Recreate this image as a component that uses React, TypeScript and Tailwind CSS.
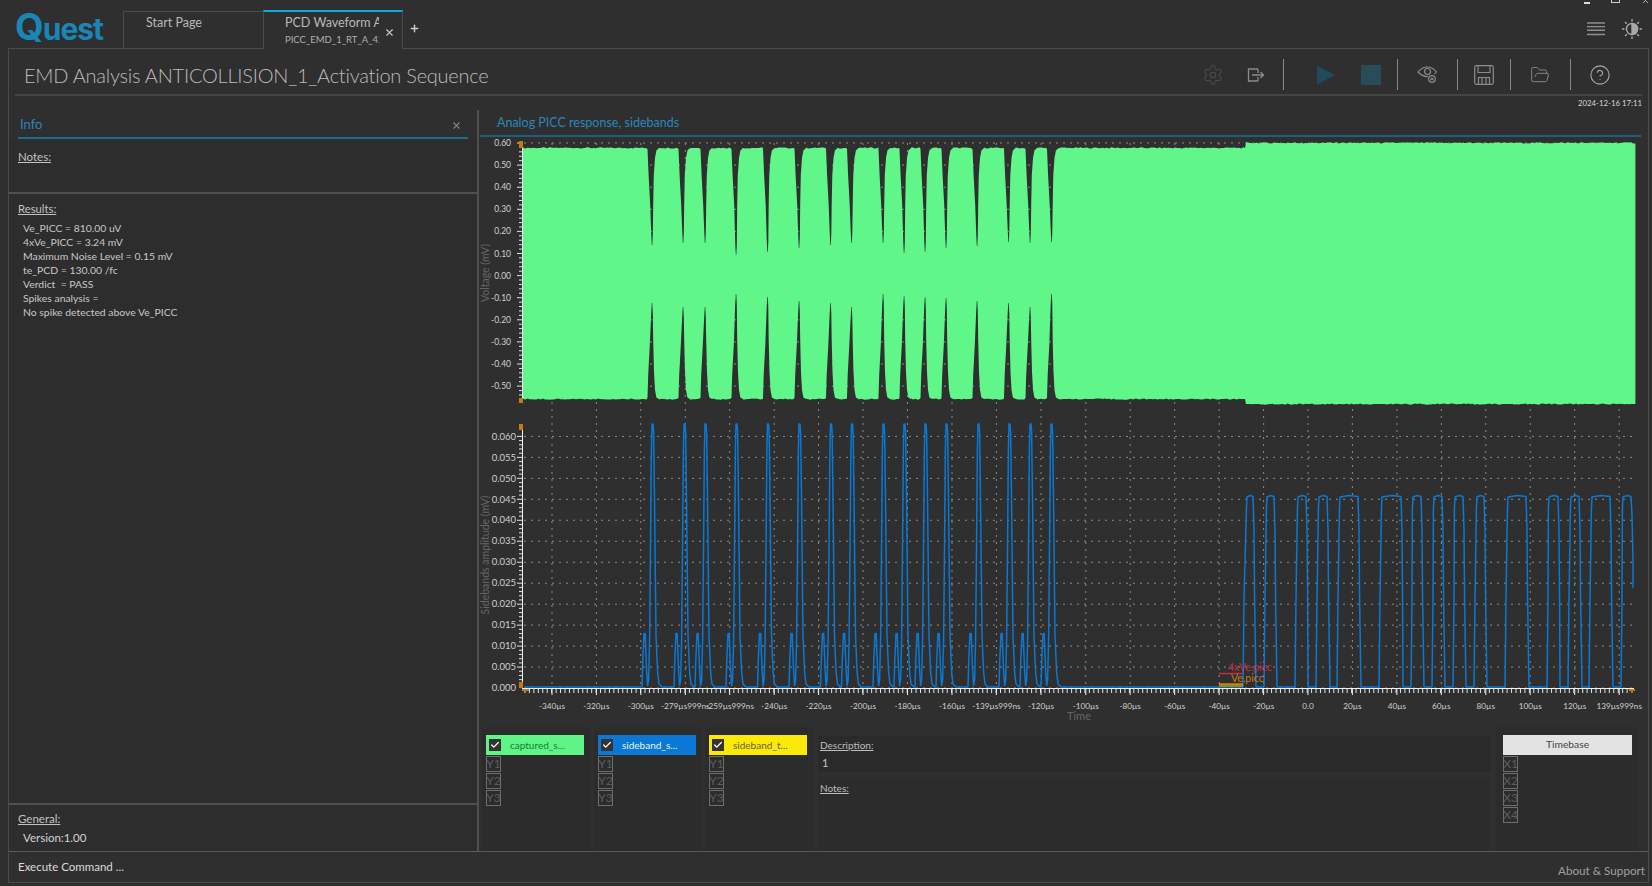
import React from 'react';
import { X, Plus, Check, Settings, FolderOpen, CircleHelp } from 'lucide-react';

const GREEN = '#61f689';
const BLUE = '#0a78d4';

// notch centre, upper tip y, lower tip y
const notches: [number, number, number][] = [
  [652, 245, 303], [683, 243, 307], [705, 243, 307], [736, 255, 294],
  [767.5, 252, 297], [799, 248, 301], [830.5, 245, 303], [851.5, 243, 307],
  [883, 243, 294], [904, 253, 296], [925, 252, 297], [946, 248, 298],
  [977, 246, 301], [1008.5, 242, 303], [1030, 243, 307], [1051.5, 242, 294],
];

// simple repeatable noise so the trace edge is not a ruler line
const noise = (i: number) => {
  const s = Math.sin(i * 12.9898) * 43758.5453;
  return s - Math.floor(s);
};

const buildGreen = () => {
  const top: string[] = [];
  const bottom: string[] = [];
  let n = 0;
  const walk = (from: number, to: number, y: number, dir: number, out: string[]) => {
    const step = 2.2;
    for (let x = from; x < to; x += step) {
      n += 1;
      out.push(`${x.toFixed(1)},${(y + dir * (noise(n) * 1.2 - 0.5)).toFixed(1)}`);
    }
  };
  let cursor = 523;
  notches.forEach(([c, tipT]) => {
    walk(cursor, c - 4.5, 148, -1, top);
    top.push(
      `${c - 4.5},149`, `${c - 3.4},175`, `${c - 1.8},205`, `${c - 0.7},${tipT - 10}`, `${c - 0.2},${tipT}`,
      `${c + 0.3},${tipT}`, `${c + 0.8},${tipT - 10}`, `${c + 1.2},205`, `${c + 1.8},175`, `${c + 3},158`, `${c + 4.4},150.5`, `${c + 7},148`
    );
    cursor = c + 7;
  });
  walk(cursor, 1245, 148, -1, top);
  top.push('1245,148', '1246,143');
  walk(1246, 1636, 143, -1, top);
  cursor = 523;
  notches.forEach(([c, , tipB]) => {
    walk(cursor, c - 4.5, 399, 1, bottom);
    bottom.push(
      `${c - 4.5},398`, `${c - 3.8},375`, `${c - 2.2},345`, `${c - 0.8},${tipB + 10}`, `${c - 0.2},${tipB}`,
      `${c + 0.3},${tipB}`, `${c + 0.8},${tipB + 10}`, `${c + 1.2},340`, `${c + 2},372`, `${c + 3},390`, `${c + 4.4},397.5`, `${c + 7},399`
    );
    cursor = c + 7;
  });
  walk(cursor, 1245, 399, 1, bottom);
  bottom.push('1245,399', '1246,404');
  walk(1246, 1636, 404, 1, bottom);
  return `M${top.join(' L')} L${bottom.reverse().join(' L')} Z`;
};

const peakX = [653, 685, 706, 737, 768.5, 800, 831.5, 852.5, 884, 905, 926, 947, 979, 1010, 1031, 1052];

// rise start, top start, top end, fall end
const pulses: [number, number, number, number][] = [
  [1243, 1247, 1253, 1256], [1264, 1267, 1274, 1277], [1295, 1298, 1306, 1308], [1316, 1319, 1327, 1330],
  [1337, 1340, 1358, 1361], [1379, 1382, 1401, 1403], [1411, 1413, 1421, 1424], [1432, 1434, 1442, 1445],
  [1453, 1455, 1463, 1466], [1474, 1477, 1484, 1487], [1505, 1508, 1526, 1529], [1547, 1549, 1558, 1560],
  [1568, 1571, 1579, 1582], [1589, 1592, 1610, 1613], [1621, 1623, 1631, 1631],
];

const buildBlue = () => {
  const pts: string[] = ['524,687'];
  peakX.forEach((c) => {
    const s: [number, number][] = [
      [c - 11, 687], [c - 10.2, 660], [c - 9, 633.5], [c - 7.8, 633.5], [c - 6.5, 668], [c - 5.4, 685.5],
      [c - 4.4, 680], [c - 3.4, 640], [c - 2.4, 540], [c - 1.6, 450], [c - 1, 424], [c, 424], [c + 0.6, 432],
      [c + 1.6, 505], [c + 3, 635], [c + 4.6, 672], [c + 6, 684], [c + 9, 687],
    ];
    s.forEach(([x, y]) => pts.push(`${x},${y}`));
  });
  pulses.forEach(([a, b, c, d], i) => {
    pts.push(`${a},687`, `${a + 1},600`, `${b - 0.6},510`, `${b},497`, `${(b + c) / 2},495.5`, `${c},496.5`);
    if (i === pulses.length - 1) {
      pts.push('1632,515', '1633,560', '1633,588');
    } else {
      pts.push(`${c + 1},530`, `${c + 1.6},600`, `${d},687`);
    }
  });
  return `M${pts.join(' L')}`;
};

const xTicks = [
  [552, '-340µs'], [596.4, '-320µs'], [640.8, '-300µs'], [685.3, '-279µs999ns'], [729.7, '-259µs999ns'],
  [774.2, '-240µs'], [818.6, '-220µs'], [863, '-200µs'], [907.5, '-180µs'], [952, '-160µs'],
  [996.4, '-139µs999ns'], [1041, '-120µs'], [1085.8, '-100µs'], [1130.2, '-80µs'], [1174.7, '-60µs'],
  [1219.2, '-40µs'], [1263.6, '-20µs'], [1308, '0.0'], [1352.4, '20µs'], [1396.9, '40µs'],
  [1441.3, '60µs'], [1485.8, '80µs'], [1530.2, '100µs'], [1574.7, '120µs'], [1619.2, '139µs999ns'],
] as [number, string][];

const voltLabels = ['0.60', '0.50', '0.40', '0.30', '0.20', '0.10', '0.00', '-0.10', '-0.20', '-0.30', '-0.40', '-0.50'];
const sideLabels = ['0.060', '0.055', '0.050', '0.045', '0.040', '0.035', '0.030', '0.025', '0.020', '0.015', '0.010', '0.005', '0.000'];

const range = (from: number, to: number, step: number) => {
  const out: number[] = [];
  for (let v = from; v <= to + 0.01; v += step) out.push(v);
  return out;
};

const Charts = () => (
  <svg viewBox="479 137 1170 590" className="block w-[1170px] h-[590px]">
    {/* grid */}
    {voltLabels.map((_, i) => (
      <line key={i} x1="524" x2="1634" y1={143 + i * 22.1} y2={143 + i * 22.1} stroke="#8c8c8c" strokeDasharray="2 5" />
    ))}
    {sideLabels.map((_, i) => (
      <line key={i} x1="524" x2="1634" y1={436.4 + i * 20.97} y2={436.4 + i * 20.97} stroke="#8c8c8c" strokeDasharray="2 5" />
    ))}
    {xTicks.map(([x], i) => (
      <line key={i} x1={x} x2={x} y1="143" y2="688" stroke="#8c8c8c" strokeDasharray="2 5" />
    ))}

    <path d={buildGreen()} fill={GREEN} />
    <path d={buildBlue()} fill="none" stroke={BLUE} strokeWidth="1.5" strokeLinejoin="round" />

    {/* y axes */}
    <line x1="522.5" x2="522.5" y1="143" y2="400" stroke="#f0f0f0" />
    <line x1="522.5" x2="522.5" y1="424" y2="688" stroke="#f0f0f0" />
    {range(143, 400, 4.42).map((y, i) => (
      <line key={i} x1={i % 5 === 0 ? 517 : 519} x2="522" y1={y} y2={y} stroke="#e4e4e4" />
    ))}
    {range(436.4, 688, 4.194).map((y, i) => (
      <line key={i} x1={i % 5 === 0 ? 517 : 519} x2="522" y1={y} y2={y} stroke="#e4e4e4" />
    ))}
    {voltLabels.map((t, i) => (
      <text key={t} x="511" y={146 + i * 22.1} textAnchor="end" fontSize="8.5" fill="#d0d0d0">{t}</text>
    ))}
    {sideLabels.map((t, i) => (
      <text key={t} x="516" y={439.6 + i * 20.97} textAnchor="end" fontSize="9.5" fill="#d0d0d0">{t}</text>
    ))}
    <text x="486" y="273" fontSize="10.5" fill="#666" textAnchor="middle" transform="rotate(-90 486 273)" dominantBaseline="middle">Voltage (mV)</text>
    <text x="486" y="555" fontSize="10.5" fill="#666" textAnchor="middle" transform="rotate(-90 486 555)" dominantBaseline="middle">Sidebands amplitude (mV)</text>

    {/* x axis */}
    <line x1="522" x2="1634" y1="688.5" y2="688.5" stroke="#f0f0f0" />
    {range(525, 1632, 4.444).map((x, i) => (
      <line key={i} x1={x} x2={x} y1="689" y2="693" stroke="#e4e4e4" />
    ))}
    {xTicks.map(([x, t]) => (
      <g key={t}>
        <line x1={x} x2={x} y1="689" y2="695" stroke="#f0f0f0" />
        <text x={x} y="709" textAnchor="middle" fontSize="8.2" fill="#d0d0d0">{t}</text>
      </g>
    ))}
    <text x="1079" y="720" textAnchor="middle" fontSize="11" fill="#666">Time</text>

    {/* range handles */}
    <path d="M519 141h4v7h-4z" fill="#c47a17" />
    <path d="M519 398h4v5h-4z" fill="#c47a17" />
    <path d="M519 424h4v6h-4z" fill="#c47a17" />
    <path d="M519 682h4v6h-4zM522 689h7v2h-7z" fill="#c47a17" />
    <path d="M1629 689h6v2h-2v2h-2v-2h-2z" fill="#c47a17" />

    {/* limit markers */}
    <line x1="1219" x2="1243" y1="673.5" y2="673.5" stroke="#b8323f" strokeWidth="1.5" />
    <text x="1228" y="671" fontSize="10.5" fill="#c23545">4xVe.picc</text>
    <rect x="1219" y="684" width="24" height="3" fill="#8f8a1f" />
    <line x1="1219" x2="1243" y1="684" y2="684" stroke="#e07f10" strokeWidth="1.5" />
    <text x="1231" y="682" fontSize="10.5" fill="#c87a10">Ve.picc</text>
  </svg>
);

const AxisBox = ({ label }: { label: string }) => (
  <div className="w-[15px] h-[16px] border border-[#6e6e6e] flex items-center justify-center text-[12px] leading-none text-[#5c5c5c]">
    {label}
  </div>
);

const SeriesColumn = ({ name, bg, text, width }: { name: string; bg: string; text: string; width: string }) => (
  <div className={`${width} shrink-0 bg-[#2c2c2c] flex flex-col`}>
    <div className={`${bg} ${text} mt-[8px] ml-[4px] w-[98px] h-[20px] flex items-center text-[10px]`}>
      <span className="ml-[3px] w-[12px] h-[12px] bg-[#333] flex items-center justify-center">
        <Check size={10} strokeWidth={3} className="text-white" />
      </span>
      <span className="ml-[9px]">{name}</span>
    </div>
    <div className="ml-[4px] mt-[1px] flex flex-col gap-[1px]">
      <AxisBox label="Y1" />
      <AxisBox label="Y2" />
      <AxisBox label="Y3" />
    </div>
  </div>
);

const Sep = ({ ml }: { ml: string }) => <div className={`${ml} w-px h-[31px] bg-[#8a8a8a]`} />;

const Toolbar = () => (
  <div className="flex items-center">
    <Settings size={22} strokeWidth={1.1} className="-ml-[1px] -mr-[1px] text-[#4c4c4c]" />
    <svg viewBox="0 0 20 20" className="ml-[23px] w-[20px] h-[20px] text-[#8c8c8c]" fill="none" stroke="currentColor" strokeWidth="1.3">
      <path d="M12 4H2.5v12H12M12 16v-4M12 4v4M6 10h11.5M14.5 7l3 3-3 3" />
    </svg>
    <Sep ml="ml-[17px]" />
    <svg viewBox="0 0 20 20" className="ml-[32px] w-[20px] h-[20px]"><path d="M1 0.5L19 10 1 19.5z" fill="#234a5b" /></svg>
    <div className="ml-[25px] w-[20px] h-[20px] bg-[#2a4c58]" />
    <Sep ml="ml-[16px]" />
    <svg viewBox="0 0 22 20" className="ml-[19px] w-[22px] h-[20px] text-[#8c8c8c]" fill="none" stroke="currentColor" strokeWidth="1.2">
      <path d="M11 11.5C6 12 3 9 1 7c2-2.500 5.500-5 9.500-5s7 2.500 9 5c-.5.7-1.200 1.300-2 2" />
      <circle cx="10.500" cy="6.500" r="3" />
      <circle cx="15" cy="14" r="3.300" />
      <circle cx="15" cy="14" r="1" />
    </svg>
    <Sep ml="ml-[18px]" />
    <svg viewBox="0 0 20 20" className="ml-[16px] w-[20px] h-[20px] text-[#8c8c8c]" fill="none" stroke="currentColor" strokeWidth="1.2">
      <rect x="0.700" y="0.700" width="18.600" height="18.600" rx="1.500" />
      <path d="M4 1v6.500h12V1M4.500 19.200v-6.700h11v6.700M8 12.500v6.700M12 12.500v6.700" />
    </svg>
    <Sep ml="ml-[16px]" />
    <FolderOpen size={20} strokeWidth={1.1} className="ml-[19px] text-[#8c8c8c]" />
    <Sep ml="ml-[20px]" />
    <CircleHelp size={22} strokeWidth={1.2} className="ml-[18px] -mr-[1px] text-[#a8a8a8]" />
  </div>
);

export default function App() {
  return (
    <div className="w-[1652px] h-[886px] overflow-hidden bg-[#2f2f2f] flex flex-col font-['Lato','Open_Sans',sans-serif]">
      {/* top strip */}
      <div className="h-[48px] shrink-0 flex items-end relative">
        <div className="w-[123px] h-[48px] shrink-0 pl-[15px] pt-[5px] flex items-center">
          <span className="font-['Inter',sans-serif] font-bold text-[#1a86b6] tracking-[-1px] leading-none flex items-baseline">
            <span className="text-[37px]">Q</span>
            <span className="text-[30px]">uest</span>
          </span>
        </div>
        <div className="w-[140px] h-[37px] border-t border-l border-[#4a4a4a] pl-[22px] pt-[2px] text-[12.5px] text-[#b9b9b9]">
          Start Page
        </div>
        <div className="w-[140px] h-[39px] border-t-2 border-t-[#12a5e3] border-x border-x-[#4a4a4a] bg-[#2f2f2f] flex items-start relative -mb-px z-10">
          <div className="ml-[21px] w-[94px] overflow-hidden whitespace-nowrap">
            <div className="text-[12.5px] leading-[18px] mt-[2px] text-[#b9b9b9]">PCD Waveform A</div>
            <div className="text-[9.5px] leading-[13px] mt-[1px] text-[#b0b0b0]">PICC_EMD_1_RT_A_42</div>
          </div>
          <X size={11} strokeWidth={2.5} className="ml-[5px] mt-[15px] text-[#c4c4c4]" />
        </div>
        <Plus size={11} strokeWidth={3} className="ml-[6px] mb-[14px] text-[#d0d0d0]" />
        <div className="ml-auto mr-[10px] self-start h-[48px] flex flex-col items-end">
          <div className="flex items-center h-[5px] gap-[21px] text-[#cfcfcf] mr-[-8px]">
            <div className="w-[6px] h-[2px] bg-[#dcdcdc]" />
            <div className="w-[9px] h-[5px] border border-[#cfcfcf] -mt-[5px]" />
            <X size={9} strokeWidth={2} className="-mt-[5px]" />
          </div>
          <div className="flex items-center mt-[14px] gap-[17px]">
            <svg viewBox="0 0 18 14" className="w-[18px] h-[14px]" fill="none" stroke="#8e8e8e" strokeWidth="1.400">
              <path d="M0 1h18M0 4.600h18M0 8.200h18M0 12.500h18" />
            </svg>
            <svg viewBox="0 0 20 20" className="w-[20px] h-[20px] text-[#a8a8a8]" fill="none" stroke="currentColor" strokeWidth="1.400">
              <circle cx="10" cy="10" r="5.500" />
              <path d="M10 4.500a5.500 5.500 0 010 11z" fill="currentColor" />
              <path d="M10 0v2.500M10 17.500V20M0 10h2.500M17.500 10H20M3 3l1.800 1.800M15.200 15.200L17 17M17 3l-1.800 1.800M4.800 15.200L3 17" />
            </svg>
          </div>
        </div>
      </div>

      {/* main panel */}
      <div className="ml-[8px] w-[1641px] h-[835px] shrink-0 border border-[#4a4a4a] flex flex-col">
        <div className="mx-[6px] h-[47px] pt-[6px] shrink-0 border-b-2 border-[#454545] flex items-center justify-between">
          <h1 className="ml-[9px] text-[20px] font-light tracking-[-0.24px] text-[#bcbcbc] whitespace-nowrap">
            EMD Analysis ANTICOLLISION_1_Activation Sequence
          </h1>
          <div className="pr-[32px]">
            <Toolbar />
          </div>
        </div>
        <div className="h-[14px] shrink-0 pr-[6px] text-right text-[7.8px] leading-[14px] text-[#d4d4d4]">2024-12-16 17:11</div>

        <div className="flex-1 min-h-0 flex">
          {/* info panel */}
          <aside className="w-[470px] shrink-0 border-r-2 border-[#4f4f4f] flex flex-col text-[#c2c2c2]">
            <div className="mx-[9px] h-[29px] shrink-0 border-b-2 border-[#1d6c8e] flex items-center justify-between pl-[2px] pr-[6px] pt-[3px]">
              <span className="text-[13px] text-[#2a86b8]">Info</span>
              <X size={11} strokeWidth={2.200} className="text-[#a0a0a0]" />
            </div>
            <div className="h-[55px] shrink-0 border-b-2 border-[#4f4f4f] pl-[9px] pt-[9px] text-[11.5px] bg-[#2d2d2d]">
              <span className="underline">Notes:</span>
            </div>
            <div className="flex-1 min-h-0 border-b-2 border-[#4f4f4f] bg-[#2d2d2d] pl-[9px] pt-[6px]">
              <div className="text-[11.3px] underline leading-[18px]">Results:</div>
              <div className="ml-[5px] mt-[3px] text-[10.4px] leading-[14px] text-[#c8c8c8]">
                <div>Ve_PICC = 810.00 uV</div>
                <div>4xVe_PICC = 3.24 mV</div>
                <div>Maximum Noise Level = 0.15 mV</div>
                <div>te_PCD = 130.00 /fc</div>
                <div>Verdict &nbsp;= PASS</div>
                <div>Spikes analysis =</div>
                <div>No spike detected above Ve_PICC</div>
              </div>
            </div>
            <div className="h-[46px] shrink-0 bg-[#2d2d2d] pl-[9px] pt-[5px]">
              <div className="text-[11.5px] underline leading-[18px]">General:</div>
              <div className="ml-[5px] mt-[2px] text-[11.5px] leading-[16px] text-[#d4d4d4]">Version:1.00</div>
            </div>
          </aside>

          {/* chart side */}
          <section className="flex-1 min-w-0 flex flex-col">
            <div className="mx-[1px] w-[1161px] h-[27px] shrink-0 border-b-2 border-[#1d5f80] pl-[17px] pt-[1px] flex items-center">
              <span className="text-[12.5px] text-[#2a86b8]">Analog PICC response, sidebands</span>
            </div>
            <Charts />
            <div className="flex-1 min-h-0 flex pl-[3px] gap-[3px]">
              <SeriesColumn name="captured_s..." bg="bg-[#5ff586]" text="text-[#1a7a3e]" width="w-[109px]" />
              <SeriesColumn name="sideband_s..." bg="bg-[#0a78d4]" text="text-[#e8f2fb]" width="w-[108px]" />
              <SeriesColumn name="sideband_t..." bg="bg-[#fbe90a]" text="text-[#6b6310]" width="w-[109px]" />
              <div className="w-[672px] shrink-0 ml-[1px] pt-[9px] flex flex-col">
                <div className="h-[36px] bg-[#2a2a2a] pl-[2px] text-[10px] leading-[18px] text-[#bdbdbd]">
                  <div className="underline">Description:</div>
                  <div className="ml-[2px] text-[#c8c8c8] text-[11px]">1</div>
                </div>
                <div className="flex-1 mt-[5px] bg-[#2c2c2c] pl-[2px] text-[10px] leading-[22px] text-[#bdbdbd]">
                  <span className="underline">Notes:</span>
                </div>
              </div>
              <div className="w-[142px] shrink-0 ml-[3px] bg-[#2c2c2c] pl-[7px]">
                <div className="mt-[8px] w-[129px] h-[20px] bg-[#e3e3e3] flex items-center justify-center text-[10.3px] text-[#444]">
                  Timebase
                </div>
                <div className="mt-[1px] flex flex-col gap-[1px]">
                  <AxisBox label="X1" />
                  <AxisBox label="X2" />
                  <AxisBox label="X3" />
                  <AxisBox label="X4" />
                </div>
              </div>
            </div>
          </section>
        </div>

        <footer className="h-[31px] shrink-0 border-t border-[#5a5a5a] flex items-center justify-between pl-[9px] pr-[3px]">
          <span className="text-[11.5px] text-[#dcdcdc]">Execute Command ...</span>
          <span className="text-[11.7px] text-[#a0a0a0] mt-[7px]">About &amp; Support</span>
        </footer>
      </div>
    </div>
  );
}
